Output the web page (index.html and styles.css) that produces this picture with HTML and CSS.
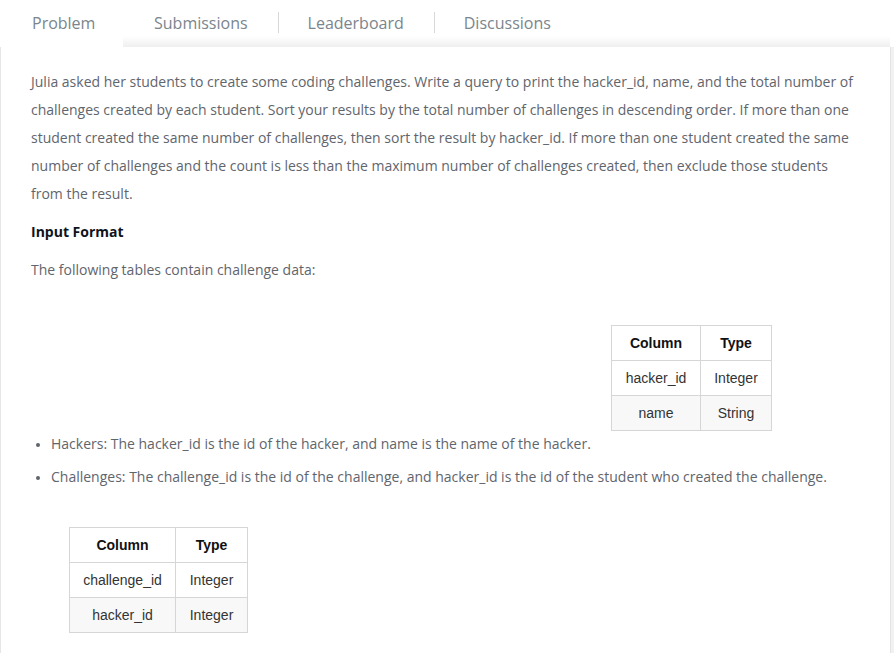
FILE: index.html
```html
<!DOCTYPE html>
<html>
<head>
<meta charset="utf-8">
<link rel="stylesheet" href="styles.css">
</head>
<body>
<div class="page">
  <nav class="tabs">
    <div class="tab active">Problem</div>
    <div class="tab-rest">
      <div class="tab">Submissions</div>
      <div class="sep"></div>
      <div class="tab">Leaderboard</div>
      <div class="sep"></div>
      <div class="tab">Discussions</div>
    </div>
  </nav>
  <section class="panel">
    <p class="para">Julia asked her students to create some coding challenges. Write a query to print the hacker_id, name, and the total number of challenges created by each student. Sort your results by the total number of challenges in descending order. If more than one student created the same number of challenges, then sort the result by hacker_id. If more than one student created the same number of challenges and the count is less than the maximum number of challenges created, then exclude those students from the result.</p>
    <h4 class="heading">Input Format</h4>
    <p class="para">The following tables contain challenge data:</p>
    <table class="tbl tbl-hackers">
      <tr><th class="c1">Column</th><th class="c2">Type</th></tr>
      <tr><td>hacker_id</td><td>Integer</td></tr>
      <tr class="alt"><td>name</td><td>String</td></tr>
    </table>
    <ul class="list">
      <li>Hackers: The hacker_id is the id of the hacker, and name is the name of the hacker.</li>
      <li>Challenges: The challenge_id is the id of the challenge, and hacker_id is the id of the student who created the challenge.</li>
    </ul>
    <table class="tbl tbl-challenges">
      <tr><th class="c1">Column</th><th class="c2">Type</th></tr>
      <tr><td>challenge_id</td><td>Integer</td></tr>
      <tr class="alt"><td>hacker_id</td><td>Integer</td></tr>
    </table>
  </section>
</div>
</body>
</html>
```

FILE: styles.css
```css
html, body {
  margin: 0;
  padding: 0;
  background: #ffffff;
}
body {
  font-family: "Open Sans", "DejaVu Sans", sans-serif;
  overflow: hidden;
}
.page {
  width: 894px;
  height: 653px;
  display: flex;
  flex-direction: column;
}
.tabs {
  display: flex;
  height: 47px;
  flex-shrink: 0;
}
.tab {
  font-size: 16px;
  color: #7a858d;
  line-height: 22px;
  padding-top: 12px;
}
.tab.active {
  width: 91px;
  background: #ffffff;
  border-left: 1px solid #ececec;
  border-image: linear-gradient(to bottom, #fff 0, #fff 38px, #e6e6e6 42px) 1;
  margin-left: -1px;
  padding-left: 32px;
}
.tab-rest {
  flex: 1;
  display: flex;
  align-items: flex-start;
  padding-left: 31px;
  background: linear-gradient(to bottom, #ffffff 0, #ffffff 36px, #f6f6f6 42px, #efefef 47px);
  margin-right: 4px;
}
.sep {
  width: 1px;
  height: 21px;
  background: #d8d8d8;
  margin: 12px 29px 0 30px;
}
.panel {
  flex: 1;
  width: 828px;
  padding: 21px 31px 0 30px;
  border-left: 1px solid #e6e6e6;
  border-right: 1px solid #e4e4e4;
  box-shadow: 3px 0 0 #f1f1f1;
  margin-right: 4px;
}
.para {
  margin: 0;
  font-size: 14px;
  line-height: 28px;
  color: #5f656d;
}
.heading {
  margin: 10px 0;
  font-size: 14px;
  line-height: 28px;
  font-weight: 700;
  color: #0e141e;
}
.tbl {
  border-collapse: collapse;
  font-family: "Liberation Sans", Arial, sans-serif;
  font-size: 14px;
  color: #333333;
}
.tbl th, .tbl td {
  border: 1px solid #d6d6d6;
  height: 35px;
  padding: 0;
  text-align: center;
  box-sizing: border-box;
}
.tbl tr { height: 35px; }
.tbl th {
  font-weight: 700;
  color: #111111;
}
.tbl .alt td {
  background: #f8f8f8;
}
.tbl-hackers {
  margin: 41px 0 0 580px;
}
.tbl-hackers .c1 { width: 89px; }
.tbl-hackers .c2 { width: 71px; }
.tbl-challenges {
  margin: 36px 0 0 38px;
}
.tbl-challenges .c1 { width: 106px; }
.tbl-challenges .c2 { width: 72px; }
.list {
  margin: -1px 0 0 0;
  padding: 0 0 0 20px;
  font-size: 14px;
  color: #5f656d;
  line-height: 28px;
}
.list li {
  margin-bottom: 5px;
}
.list li::marker {
  font-size: 12px;
}
```
